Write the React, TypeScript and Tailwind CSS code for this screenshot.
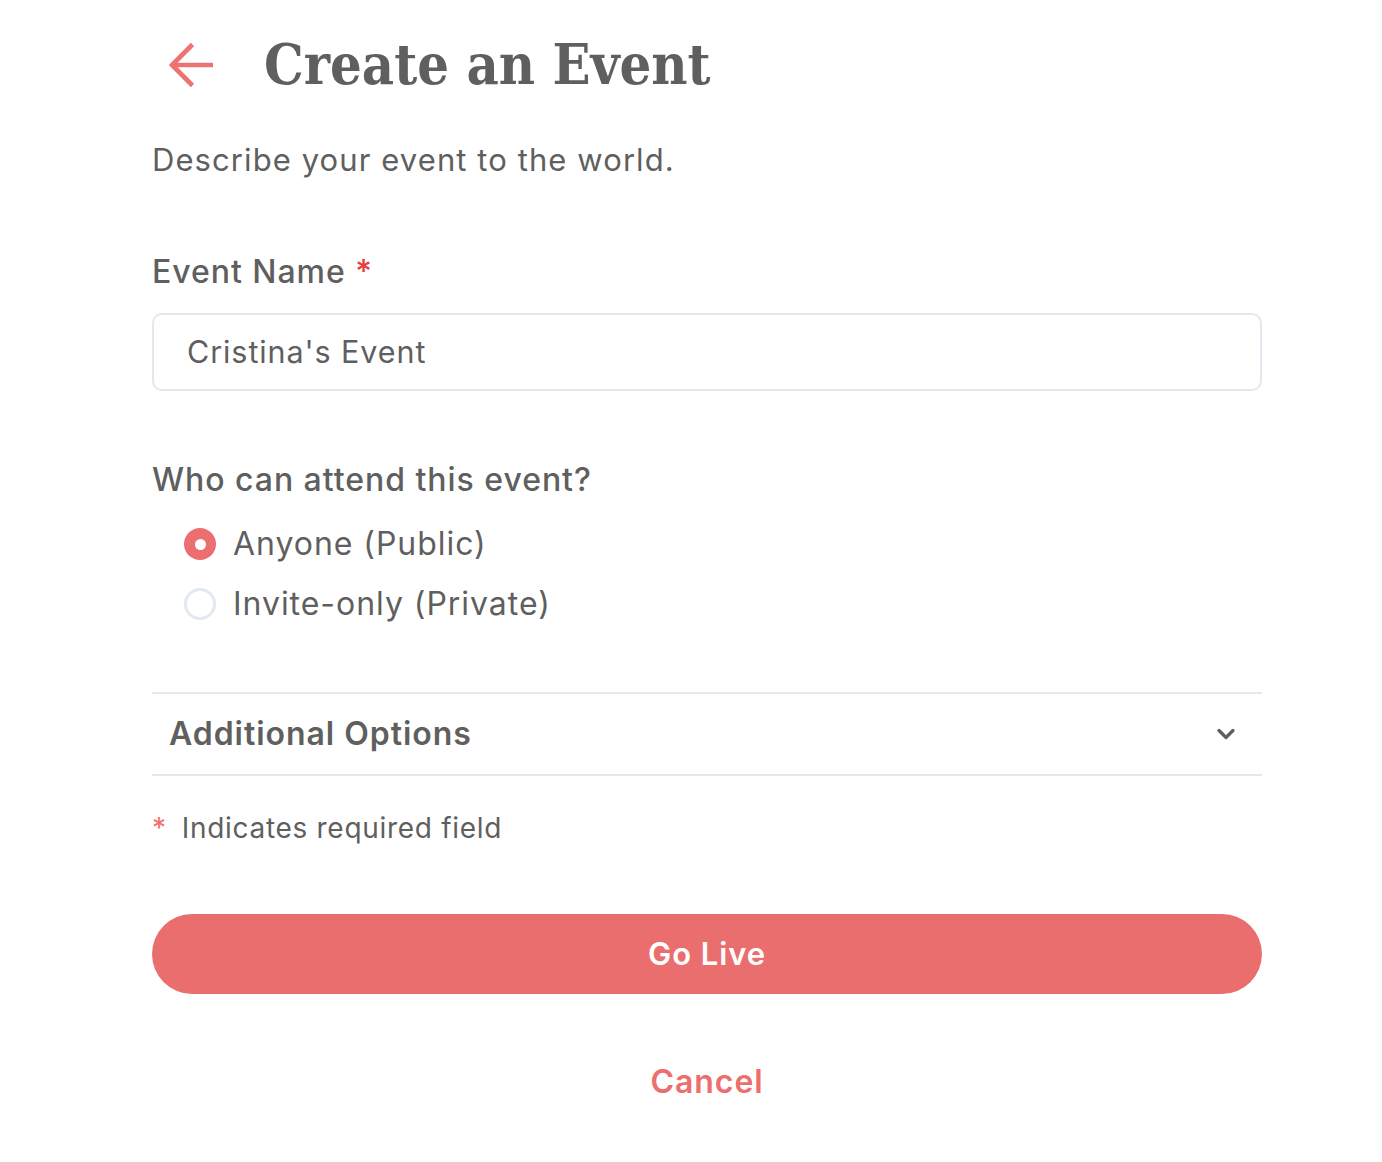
import { ChevronDown } from 'lucide-react';

const sans = { fontFamily: 'Inter, "Noto Sans", sans-serif' };

const Radio = ({ checked, label }: { checked: boolean; label: string }) => {
  return (
    <label className="flex h-[40px] items-center gap-[17px] pl-[32px]">
      {checked ? (
        <span className="flex h-[32px] w-[32px] items-center justify-center rounded-full bg-[#ec6e6e]">
          <span className="h-[11px] w-[11px] rounded-full bg-white" />
        </span>
      ) : (
        <span className="h-[32px] w-[32px] rounded-full border-[3px] border-[#e2e8f0] bg-white" />
      )}
      <span className="text-[32px] tracking-[0.03em] text-[#5f5f5f]">{label}</span>
    </label>
  );
};

export default function App() {
  return (
    <div className="min-h-[1162px] bg-white" style={sans}>
      <div className="ml-[152px] w-[1110px] pt-[29px]">
        {/* header */}
        <div className="flex h-[72px] items-center">
          <button className="ml-[17px] text-[#ef7272]">
            <svg width="46" height="46" viewBox="0 0 46 46" fill="none" stroke="currentColor" strokeWidth="4.6">
              <path d="M3 23H44" />
              <path d="M23.5 2.5L3 23L23.5 43.5" />
            </svg>
          </button>
          <h1
            className="ml-[49px] text-[55.5px] font-bold text-[#5f5f5f]"
            style={{ fontFamily: '"DejaVu Serif Condensed", "DejaVu Serif", serif' }}
          >
            Create an Event
          </h1>
        </div>

        <p className="mt-[39px] text-[31px] leading-[40px] tracking-[0.035em] text-[#5f5f5f]">
          Describe your event to the world.
        </p>

        {/* event name */}
        <div className="mt-[72px] text-[32px] font-medium leading-[40px] tracking-[0.03em] text-[#5f5f5f]">
          Event Name <span className="text-[#e53e3e]">*</span>
        </div>
        <div className="mt-[21px] flex h-[78px] items-center rounded-[10px] border-2 border-[#e2e8f0] px-[33px]">
          <span className="text-[30.5px] tracking-[0.03em] text-[#5f5f5f]">Cristina's Event</span>
        </div>

        {/* attendance */}
        <div className="mt-[69px] text-[32px] font-medium leading-[40px] tracking-[0.03em] text-[#5f5f5f]">
          Who can attend this event?
        </div>
        <div className="mt-[24px] flex flex-col gap-[20px]">
          <Radio checked label="Anyone (Public)" />
          <Radio checked={false} label="Invite-only (Private)" />
        </div>

        {/* additional options */}
        <div className="mt-[68px] flex h-[84px] items-center justify-between border-y-2 border-[#e2e8f0] pl-[17px] pr-[22px]">
          <span className="text-[32px] font-semibold tracking-[0.03em] text-[#5f5f5f]">Additional Options</span>
          <ChevronDown size={28} strokeWidth={2.8} className="text-[#5f5f5f]" />
        </div>

        <div className="mt-[34px] flex h-[36px] items-center text-[28px] tracking-[0.025em] text-[#5f5f5f]">
          <span className="text-[#f07070]">*</span>
          <span className="ml-[15px]">Indicates required field</span>
        </div>

        <button className="mt-[68px] flex h-[80px] w-full items-center justify-center rounded-full bg-[#eb6e6e] text-[31px] font-semibold tracking-[0.03em] text-white">
          Go Live
        </button>

        <div className="mt-[68px] text-center text-[32px] font-semibold leading-[40px] tracking-[0.03em] text-[#ec6e6e]">
          Cancel
        </div>
      </div>
    </div>
  );
}
